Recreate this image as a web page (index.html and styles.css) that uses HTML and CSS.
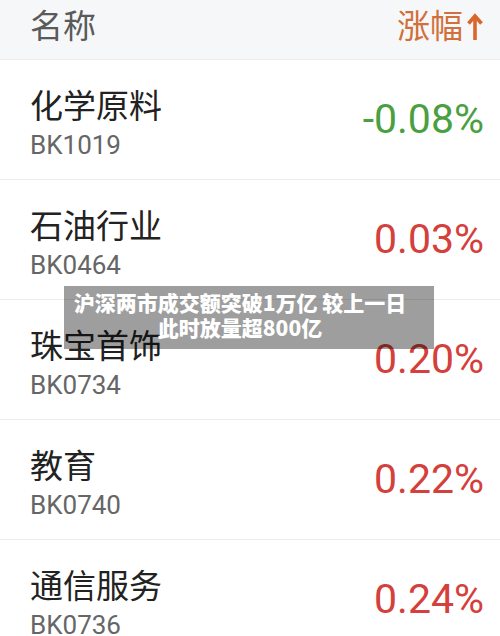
FILE: index.html
```html
<!DOCTYPE html>
<html lang="zh">
<head>
<meta charset="utf-8">
<link rel="stylesheet" href="styles.css">
</head>
<body>
<div class="page">
  <div class="header">
    <span class="h-name">名称</span>
    <span class="h-change">涨幅<svg class="arrow" width="16" height="27" viewBox="0 0 16 27"><path d="M8 4 L8 27" stroke="#d9662a" stroke-width="3.6" fill="none"/><path d="M1.5 10.5 L8 3 L14.5 10.5" stroke="#d9662a" stroke-width="3.6" fill="none"/></svg></span>
  </div>
  <div class="row">
    <div class="info"><div class="name">化学原料</div><div class="code">BK1019</div></div>
    <div class="pct down">-0.08%</div>
  </div>
  <div class="row">
    <div class="info"><div class="name">石油行业</div><div class="code">BK0464</div></div>
    <div class="pct up">0.03%</div>
  </div>
  <div class="row">
    <div class="info"><div class="name">珠宝首饰</div><div class="code">BK0734</div></div>
    <div class="pct up">0.20%</div>
  </div>
  <div class="row">
    <div class="info"><div class="name">教育</div><div class="code">BK0740</div></div>
    <div class="pct up">0.22%</div>
  </div>
  <div class="row">
    <div class="info"><div class="name">通信服务</div><div class="code">BK0736</div></div>
    <div class="pct up">0.24%</div>
  </div>
  <div class="caption">沪深两市成交额突破1万亿 较上一日<br>此时放量超800亿</div>
</div>
</body>
</html>
```

FILE: styles.css
```css
* { box-sizing: border-box; }
html, body { margin: 0; padding: 0; }
body {
  width: 500px;
  height: 636px;
  overflow: hidden;
  background: #fff;
  font-family: Roboto, "Noto Sans CJK SC", sans-serif;
}
.page { position: relative; }
.header {
  height: 60px;
  background: #f6f7f9;
  border-bottom: 1px solid #ececec;
  display: flex;
  align-items: center;
  justify-content: space-between;
  padding: 0 17px 11px 30px;
}
.h-name {
  font-family: "Noto Sans CJK SC", sans-serif;
  font-size: 33px;
  color: #5a5a5a;
  line-height: 40px;
}
.h-change {
  font-family: "Noto Sans CJK SC", sans-serif;
  font-size: 33px;
  color: #d1703a;
  line-height: 40px;
  display: flex;
  align-items: center;
  gap: 4px;
}
.arrow { display: block; margin-top: 4px; }
.row {
  height: 120px;
  border-bottom: 1px solid #ececec;
  display: flex;
  align-items: center;
  justify-content: space-between;
  padding: 0 16px 0 30px;
}
.info {
  display: flex;
  flex-direction: column;
  gap: 8px;
  padding-top: 6px;
}
.name {
  font-family: "Noto Sans CJK SC", sans-serif;
  font-size: 33px;
  line-height: 36px;
  color: #222;
}
.code {
  font-size: 26px;
  line-height: 30px;
  color: #666;
}
.pct {
  font-size: 41px;
  line-height: 50px;
  margin-bottom: 2px;
}
.down { color: #4aa040; }
.up { color: #d4403c; }
.caption {
  position: absolute;
  left: 64px;
  top: 286px;
  width: 370px;
  height: 63px;
  background: rgba(0, 0, 0, 0.38);
  color: #fff;
  font-family: "Noto Sans CJK SC", sans-serif;
  font-weight: 900;
  font-size: 21px;
  line-height: 25px;
  text-align: center;
  padding: 4px 20px 0 2px;
}
```
